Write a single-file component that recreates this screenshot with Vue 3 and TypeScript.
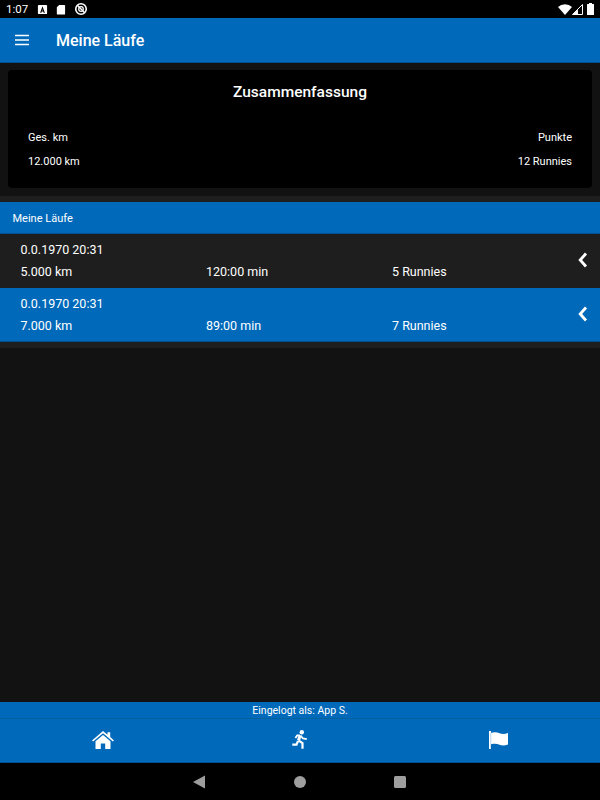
<template>
  <div class="app">
    <div class="status">
      <span class="time">1:07</span>
      <svg class="st-a" width="11" height="11" viewBox="0 0 12 12"><rect x="1" y="1" width="10" height="10" rx="1" fill="#fff" /><path d="M6 2.500 3.400 9.500h1.300l.5-1.400h1.600l.5 1.400h1.300zM5.600 7 6 5.600 6.400 7z" fill="#000" /></svg>
      <svg class="st-sd" width="11" height="11" viewBox="0 0 12 12"><path d="M4.500 1H10a1 1 0 0 1 1 1v8.500a1 1 0 0 1-1 1H3a1 1 0 0 1-1-1V3.500z" fill="#fff" /></svg>
      <svg class="st-dnd" width="14" height="14" viewBox="0 0 16 16"><circle cx="8" cy="8" r="6" fill="none" stroke="#fff" stroke-width="1.800" /><circle cx="8" cy="8" r="2.600" fill="none" stroke="#fff" stroke-width="1.400" /><path d="M3.800 3.800 12.200 12.200" stroke="#fff" stroke-width="1.600" /></svg>
      <span class="grow"></span>
      <svg width="14" height="11" viewBox="0 0 14 11"><path d="M0 3a10 10 0 0 1 14 0L7 11z" fill="#fff" /></svg>
      <svg class="sig" width="11" height="11" viewBox="0 0 11 11"><path d="M10.500.5v10H.5z" fill="none" stroke="#fff" /><path d="M6 5.500v5H.5z" fill="#fff" /></svg>
      <svg width="7" height="12" viewBox="0 0 7 12"><path d="M2 0h3v1h1.500a.5.500 0 0 1 .5.500V12H0V1.500A.5.500 0 0 1 .5 1H2z" fill="#fff" /></svg>
    </div>
    <header class="top">
      <svg width="16" height="12" viewBox="0 0 16 12"><path d="M1 1.500h14M1 6h14M1 10.500h14" stroke="#fff" stroke-width="1.600" /></svg>
      <span class="title">Meine Läufe</span>
    </header>
    <main class="content">
      <section class="summary">
        <h2>Zusammenfassung</h2>
        <div class="sumrow">
          <span>Ges. km</span>
          <span>Punkte</span>
        </div>
        <div class="sumrow">
          <span>{{ totalKm }}</span>
          <span>{{ totalPoints }}</span>
        </div>
      </section>
      <section class="list">
        <div class="listhead">Meine Läufe</div>
        <div v-for="run in runs" :key="run.km" class="run" :class="{ active: run.active }">
          <div class="rundate">{{ run.date }}</div>
          <div class="cols">
            <span>{{ run.km }}</span>
            <span>{{ run.time }}</span>
            <span>{{ run.points }}</span>
          </div>
          <svg class="chev" width="10" height="16" viewBox="0 0 10 16"><path d="M8 1.500 2.200 8 8 14.500" fill="none" stroke="#fff" stroke-width="2.800" /></svg>
        </div>
      </section>
    </main>
    <footer class="bottom">
      <div class="login">Eingelogt als: App S.</div>
      <nav class="tabs">
        <svg width="22" height="18" viewBox="0 0 22 18"><path d="M11 0 15.500 3.800V1.200h2.700v4.900L22 9.400l-1.100 1.200L11 2.300 1.100 10.600 0 9.400z" fill="#fff" /><path d="M11 3.900 3.500 10.200V18h5.300v-5.500h4.400V18h5.300v-7.800z" fill="#fff" /></svg>
        <svg width="16" height="19" viewBox="0 0 16 19">
          <circle cx="9.800" cy="2.300" r="2.200" fill="#fff" />
          <g fill="none" stroke="#fff">
            <path d="M8 5.500 6.500 10.500" stroke-width="3" />
            <path d="M8 5.400H5.200L3.400 8M8.500 5.500 11 8.500 14.800 9.200" stroke-width="1.800" />
            <path d="M6.500 10.500 10.500 13V18.800M6 11 4.500 14.600H.3" stroke-width="2.200" />
          </g>
        </svg>
        <svg class="flag" width="19" height="18" viewBox="0 0 19 18"><circle cx="1" cy="1" r="1" fill="#fff" /><rect x="0" y="0" width="1.800" height="18" fill="#fff" /><path d="M2.100 1.800C6 .8 8 1.300 10.500 2.200s5 1 8.500-.2v11.500c-3.500 1.200-6 1.200-8.500.2s-4.500-1.400-8.400-.5z" fill="#fff" /></svg>
      </nav>
    </footer>
    <div class="sysnav">
      <svg class="back" width="14" height="14" viewBox="0 0 14 14"><path d="M13 0.500v13L1 7z" fill="#9e9e9e" /></svg>
      <svg width="12" height="12" viewBox="0 0 12 12"><circle cx="6" cy="6" r="6" fill="#9e9e9e" /></svg>
      <svg width="12" height="12" viewBox="0 0 12 12"><rect width="12" height="12" rx="1.500" fill="#9e9e9e" /></svg>
    </div>
  </div>
</template>

<script setup lang="ts">
interface Run {
  date: string
  km: string
  time: string
  points: string
  active: boolean
}

const totalKm = '12.000 km'
const totalPoints = '12 Runnies'

const runs: Run[] = [
  { date: '0.0.1970 20:31', km: '5.000 km', time: '120:00 min', points: '5 Runnies', active: false },
  { date: '0.0.1970 20:31', km: '7.000 km', time: '89:00 min', points: '7 Runnies', active: true }
]
</script>

<style>
body {
  margin: 0;
  background: #121212;
}
</style>

<style scoped>
.app {
  width: 600px;
  height: 800px;
  display: flex;
  flex-direction: column;
  overflow: hidden;
  background: #121212;
  color: #fff;
  font-family: Roboto, "Liberation Sans", sans-serif;
}
.status {
  height: 18px;
  flex: none;
  background: #000;
  display: flex;
  align-items: center;
  padding: 0 6px;
  font-size: 11.500px;
  box-sizing: border-box;
}
.time {
  width: 21px;
}
.st-a {
  margin-left: 10px;
}
.st-sd {
  margin-left: 7px;
}
.st-dnd {
  margin-left: 8px;
}
.grow {
  flex: 1;
}
.sig {
  margin-right: 4px;
}
.top {
  height: 45px;
  flex: none;
  background: #0069ba;
  border-bottom: 1px solid #00508f;
  box-sizing: border-box;
  display: flex;
  align-items: center;
  padding-left: 14px;
}
.title {
  margin-left: 26px;
  font-size: 16px;
  font-weight: 500;
}
.content {
  flex: 1;
  display: flex;
  flex-direction: column;
}
.summary {
  margin: 7px 8px 8px;
  height: 118px;
  box-sizing: border-box;
  background: #000;
  border-radius: 4px;
  padding: 13px 20px 0;
  font-size: 11px;
}
.summary h2 {
  margin: 0 0 29px;
  font-size: 15.500px;
  line-height: 19px;
  font-weight: 500;
  text-align: center;
}
.sumrow {
  display: flex;
  justify-content: space-between;
  line-height: 13px;
  margin-bottom: 11px;
}
.list {
  background: #1e1e1e;
  padding: 6px 0;
}
.listhead {
  height: 32px;
  background: #0069ba;
  border-bottom: 1px solid #00508f;
  box-sizing: border-box;
  padding-left: 12.500px;
  font-size: 11px;
  line-height: 34px;
}
.run {
  position: relative;
  height: 54px;
  box-sizing: border-box;
  padding: 8px 20.500px 0;
  font-size: 12.500px;
  background: #1e1e1e;
}
.run.active {
  background: #0069ba;
  border-bottom: 1px solid #00508f;
}
.rundate {
  line-height: 15px;
  margin-bottom: 7px;
}
.cols {
  display: grid;
  grid-template-columns: 185.500px 186px 1fr;
  line-height: 16px;
}
.chev {
  position: absolute;
  right: 12px;
  top: 18px;
}
.bottom {
  height: 61px;
  flex: none;
  background: #0069ba;
  display: flex;
  flex-direction: column;
}
.login {
  height: 17px;
  border-bottom: 1px solid #00619f;
  box-sizing: border-box;
  font-size: 10.500px;
  line-height: 18px;
  text-align: center;
}
.tabs {
  flex: 1;
  display: grid;
  grid-template-columns: repeat(3, 1fr);
  justify-items: center;
  align-items: center;
  padding: 0 4px 2px;
  border-bottom: 1px solid #00508f;
}
.flag {
  margin-left: 3px;
}
.sysnav {
  height: 37px;
  flex: none;
  background: #000;
  box-sizing: border-box;
  padding: 0 150px;
  display: grid;
  grid-template-columns: 1fr 1fr 1fr;
  justify-items: center;
  align-items: center;
}
.back {
  margin-right: 3px;
}
</style>
